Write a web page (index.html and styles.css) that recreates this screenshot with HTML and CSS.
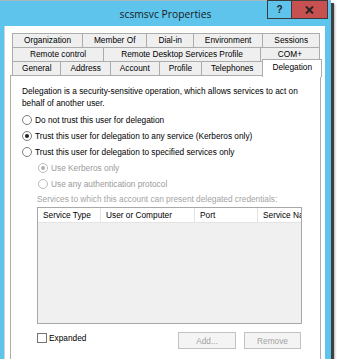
FILE: index.html
```html
<!DOCTYPE html>
<html lang="en">

<head>
	<meta charset="utf-8">
	<title>scsmsvc Properties</title>
	<link rel="stylesheet" href="styles.css">
</head>

<body>
	<div class="window">
		<div class="titlebar">
			<span></span>
			<div class="title">scsmsvc Properties</div>
			<div class="caption">
				<span class="cap help">?</span>
				<span class="cap close">
					<svg width="9" height="8" viewBox="0 0 9 8">
						<path d="M1 0.5 L8 7.5 M8 0.5 L1 7.5" stroke="#2b2222" stroke-width="2" fill="none" />
					</svg>
				</span>
			</div>
		</div>

		<div class="client">
			<nav class="tabs">
				<div class="tab-row">
					<span class="tab">Organization</span>
					<span class="tab">Member Of</span>
					<span class="tab">Dial-in</span>
					<span class="tab">Environment</span>
					<span class="tab">Sessions</span>
				</div>
				<div class="tab-row">
					<span class="tab">Remote control</span>
					<span class="tab">Remote Desktop Services Profile</span>
					<span class="tab">COM+</span>
				</div>
				<div class="tab-row">
					<span class="tab">General</span>
					<span class="tab">Address</span>
					<span class="tab">Account</span>
					<span class="tab">Profile</span>
					<span class="tab">Telephones</span>
					<span class="tab valgt">Delegation</span>
				</div>
			</nav>

			<section class="panel">
				<p class="intro">Delegation is a security-sensitive operation, which allows services to act on<br>behalf of another user.</p>

				<div class="options">
					<label class="opt"><span class="radio"></span>Do not trust this user for delegation</label>
					<label class="opt"><span class="radio on"></span>Trust this user for delegation to any service (Kerberos only)</label>
					<label class="opt"><span class="radio"></span>Trust this user for delegation to specified services only</label>
					<label class="opt sub off"><span class="radio on"></span>Use Kerberos only</label>
					<label class="opt sub off"><span class="radio"></span>Use any authentication protocol</label>
				</div>

				<div class="services-label">Services to which this account can present delegated credentials:</div>

				<div class="list">
					<div class="list-head">
						<span class="col">Service Type</span>
						<span class="col">User or Computer</span>
						<span class="col">Port</span>
						<span class="col">Service Name</span>
					</div>
				</div>

				<div class="bottom">
					<label class="check"><span class="box"></span>Expanded</label>
					<div class="buttons">
						<button class="btn add" disabled>Add...</button>
						<button class="btn remove" disabled>Remove</button>
					</div>
				</div>
			</section>
		</div>
	</div>
</body>

</html>
```

FILE: styles.css
```css
*,
body * {
	box-sizing: border-box;
}

body {
	margin: 0;
	padding: 0;
	background: #fff;
	font-family: "Liberation Sans", Arial, sans-serif;
	font-size: 8.3px;
	color: #000;
}

.window {
	width: 331px;
	height: 359px;
	background: #5ec4ec;
	border-top: 1px solid #a9b8bf;
	display: flex;
	flex-direction: column;
	box-shadow: 3px 3px 0 #3f3f3f, 4px 4px 2px rgba(0, 0, 0, 0.3);
}

/* title bar */
.titlebar {
	height: 25px;
	display: grid;
	grid-template-columns: 1fr auto 1fr;
	align-items: start;
}

.title {
	font-family: "Open Sans", sans-serif;
	font-size: 10.3px;
	line-height: 26px;
	color: #1a1a1a;
}

.caption {
	justify-self: end;
	display: flex;
	margin-top: -1px;
	margin-right: 3px;
}

.cap {
	height: 19px;
	border: 1px solid #3a3a3a;
	display: flex;
	align-items: center;
	justify-content: center;
}

.help {
	width: 24px;
	border-right: none;
	background: #5ec4ec;
	font-weight: bold;
	font-size: 10px;
	color: #1e1e1e;
}

.close {
	width: 37px;
	background: #c75050;
}

/* client area */
.client {
	flex: 1;
	margin: 0 6px 0 4px;
	background: #fff;
	border-left: 1px solid #cfd3d5;
	padding: 7px 4px 0 5px;
	display: flex;
	flex-direction: column;
	overflow: hidden;
}

.tabs {
	padding: 0 1px 0 2px;
}

.tab-row {
	display: flex;
	margin-top: -1px;
}

.tab-row:first-child {
	margin-top: 0;
}

.tab {
	flex: 1 1 auto;
	height: 15px;
	padding: 0 4px;
	margin-left: -1px;
	border: 1px solid #acacac;
	background: #efefef;
	text-align: center;
	line-height: 13px;
	white-space: nowrap;
}

.tab:first-child {
	margin-left: 0;
}

.tab.valgt {
	height: 18px;
	margin: -2px -2px -1px -1px;
	border-bottom: none;
	background: #fff;
	line-height: 14px;
	z-index: 1;
}

.panel {
	flex: 1;
	margin-top: -1px;
	border: 1px solid #acacac;
	border-bottom: none;
	padding: 9px 10px 0 11px;
}

.intro {
	margin: 0;
	line-height: 12px;
}

.options {
	margin-top: 3px;
}

.opt {
	display: flex;
	align-items: center;
	gap: 3px;
	height: 16px;
}

.opt.sub {
	padding-left: 16px;
}

.opt.off {
	color: #9a9a9a;
}

.radio {
	width: 10px;
	height: 10px;
	border: 1px solid #7c7c7c;
	border-radius: 50%;
	background: #fff;
	display: flex;
	align-items: center;
	justify-content: center;
}

.radio.on::after {
	content: "";
	width: 4px;
	height: 4px;
	border-radius: 50%;
	background: #222;
}

.off .radio {
	border-color: #bcbcbc;
}

.off .radio.on::after {
	background: #b0b0b0;
}

.services-label {
	margin: 1px 0 2px 15px;
	line-height: 12px;
	color: #a3a3a3;
}

.list {
	margin-left: 15px;
	width: 265px;
	height: 117px;
	border: 1px solid #a8a8a8;
	background: #f0f0f0;
	overflow: hidden;
}

.list-head {
	display: grid;
	grid-template-columns: 63px 94px 63px 60px;
	height: 15px;
	background: #fff;
	border-bottom: 1px solid #e3e3e3;
}

.col {
	padding-left: 5px;
	border-right: 1px solid #e3e3e3;
	line-height: 14px;
	white-space: nowrap;
	overflow: hidden;
}

.bottom {
	display: flex;
	align-items: flex-start;
	margin: 8px 0 0 15px;
	width: 264px;
}

.check {
	display: flex;
	align-items: center;
	gap: 2px;
	margin-top: 1px;
	line-height: 10px;
}

.box {
	width: 10px;
	height: 10px;
	border: 1px solid #737373;
	background: #fff;
}

.buttons {
	margin-left: auto;
	display: flex;
	gap: 8px;
}

.btn {
	height: 17px;
	padding: 0;
	border: 1px solid #c2c2c2;
	background: #f4f4f4;
	color: #a3a3a3;
	font-family: "Liberation Sans", Arial, sans-serif;
	font-size: 8.3px;
}

.add {
	width: 58px;
}

.remove {
	width: 57px;
}
```
